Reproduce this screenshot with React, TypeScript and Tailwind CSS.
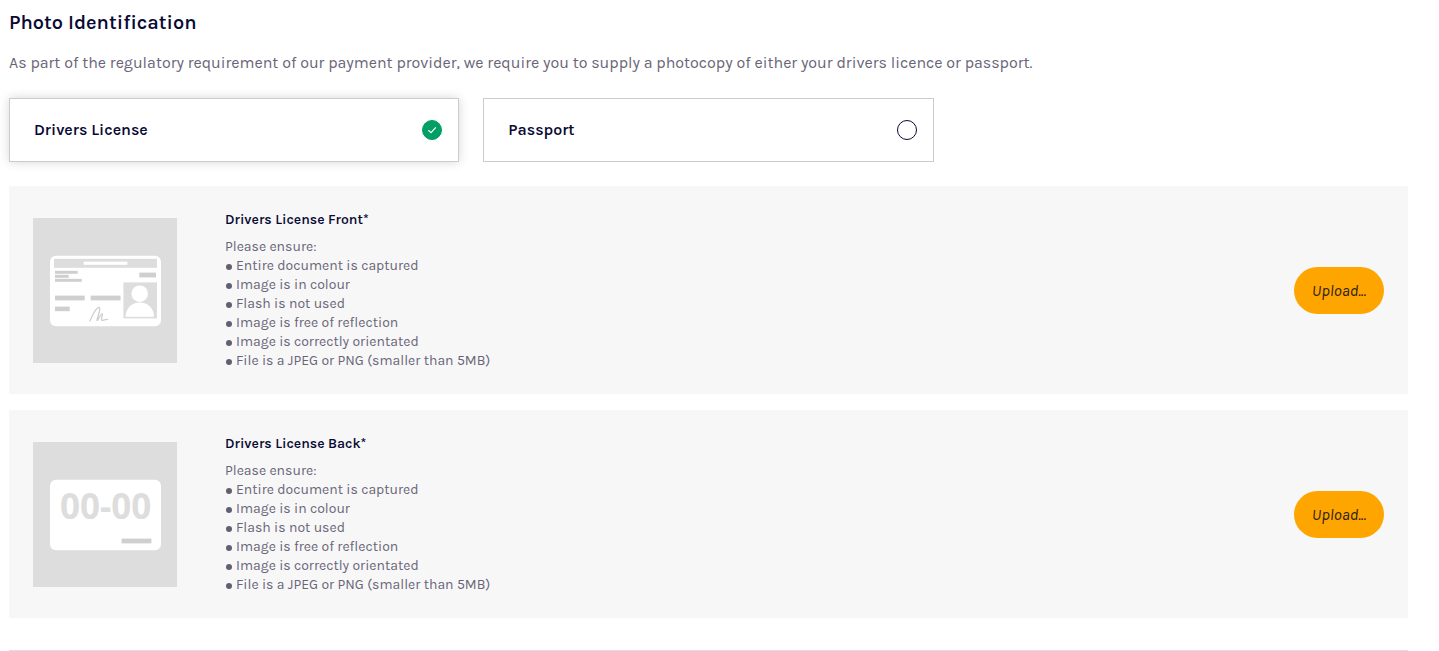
import {useState} from "react";
import type {ReactNode} from "react";

const documentTypes = [
    {id: "license", label: "Drivers License"},
    {id: "passport", label: "Passport"},
];

const requirements = [
    "Entire document is captured",
    "Image is in colour",
    "Flash is not used",
    "Image is free of reflection",
    "Image is correctly orientated",
    "File is a JPEG or PNG (smaller than 5MB)",
];

function LicenseFront() {
    return (
        <svg viewBox="0 0 144 145" className="h-[145px] w-36 shrink-0 bg-[#dddddd]" aria-hidden="true">
            <rect x="17" y="37.7" width="111" height="70.6" rx="6" fill="#fff"/>
            <rect x="21" y="40.8" width="103" height="9" fill="#dddddd"/>
            <rect x="50.6" y="43.6" width="43.8" height="3.2" fill="#fff"/>
            <g fill="#cfcfcf">
                <rect x="22" y="52.8" width="22.7" height="3"/>
                <rect x="22" y="56.8" width="13.7" height="3"/>
                <rect x="22" y="60.8" width="26.7" height="3"/>
                <rect x="106.3" y="54.6" width="16.7" height="4.8"/>
                <rect x="22" y="77.6" width="29.7" height="4.8"/>
                <rect x="57.6" y="77.6" width="30" height="4.8"/>
                <rect x="22" y="88.6" width="14.7" height="4.6"/>
            </g>
            {/* photo */}
            <rect x="90.4" y="64.4" width="33.6" height="36" fill="#dddddd"/>
            <circle cx="106.7" cy="75.7" r="8.3" fill="#fff"/>
            <path d="M92.6 98.8C92.6 90.4 98.6 84.4 106.8 84.4S121 90.4 121 98.8Z" fill="#fff"/>
            {/* signature */}
            <path
                d="M56.8 103C59.5 97.5 62.3 89.6 66 89.3C68.4 89.6 64.5 99 63.9 102.4C65 103.2 67.4 95.2 69.3 95.8C70.4 96.6 67.2 101.6 69 102.4C70.8 102.8 72 101 74.6 101.4"
                fill="none"
                stroke="#cfcfcf"
                strokeWidth="1.3"
                strokeLinecap="round"
                strokeLinejoin="round"
            />
        </svg>
    );
}

function LicenseBack() {
    return (
        <svg viewBox="0 0 144 145" className="h-[145px] w-36 shrink-0 bg-[#dddddd]" aria-hidden="true">
            <rect x="17" y="37.7" width="111" height="70.6" rx="6" fill="#fff"/>
            <text x="27" y="77" className="font-['Open_Sans',sans-serif] text-[35px] font-bold" fill="#dddddd">00-00</text>
            <rect x="88.6" y="96.6" width="29.8" height="4.8" fill="#cfcfcf"/>
        </svg>
    );
}

function UploadRow({title, picture}: { title: string; picture: ReactNode }) {
    return (
        <section className="flex items-center bg-[#f7f7f7] p-6">
            {picture}
            <div className="ml-12 flex-1 text-[14px] leading-[19px] text-[#696577]">
                <h2 className="mb-2 font-semibold text-[#090a33]">{title}*</h2>
                <p>Please ensure:</p>
                <ul>
                    {requirements.map((item) => (
                        <li key={item} className="flex items-center gap-1">
                            <span className="mt-0.5 ml-px size-1.5 rounded-full bg-[#625f70]"/>
                            {item}
                        </li>
                    ))}
                </ul>
            </div>
            <button
                type="button"
                aria-label={`Upload ${title}`}
                className="h-[47px] rounded-full bg-[#ffa500] px-[18px] pt-0.5 text-base italic text-[#2b2118]"
            >
                Upload...
            </button>
        </section>
    );
}

export default function App() {
    const [selected, setSelected] = useState("license");

    return (
        <main className="ml-[9px] mr-[31px] pt-[11px] font-['Karla','Inter',sans-serif] text-[#090a33]">
            <h1 className="mb-4 text-xl leading-6 font-semibold">Photo Identification</h1>
            <p className="mb-[23px] text-base leading-6 text-[#696577]">
                As part of the regulatory requirement of our payment provider, we require you to supply a photocopy of
                either your drivers licence or passport.
            </p>

            <div className="mb-6 grid grid-cols-3 gap-6">
                {documentTypes.map((type) => (
                    <label
                        key={type.id}
                        className="flex h-16 cursor-pointer items-center justify-between border border-[#cccccc] bg-white pr-4 pl-6 text-base font-semibold has-checked:shadow-[0_0_10px_rgba(0,0,0,0.16)]"
                    >
                        {type.label}
                        <span className="relative flex size-5">
                            <input
                                type="radio"
                                name="documentType"
                                checked={selected === type.id}
                                onChange={() => setSelected(type.id)}
                                className="peer size-5 cursor-pointer appearance-none rounded-full border border-[#090a33] checked:border-[#009f66] checked:bg-[#009f66]"
                            />
                            <svg
                                viewBox="0 0 20 20"
                                className="pointer-events-none absolute inset-0 hidden peer-checked:block"
                                fill="none"
                                stroke="#fff"
                                strokeWidth="1.2"
                                aria-hidden="true"
                            >
                                <path d="M6.3 10.2L9 12.6L13.8 7.3"/>
                            </svg>
                        </span>
                    </label>
                ))}
            </div>

            <div className="flex flex-col gap-4">
                <UploadRow title="Drivers License Front" picture={<LicenseFront/>}/>
                <UploadRow title="Drivers License Back" picture={<LicenseBack/>}/>
            </div>

            <hr className="mt-8 border-[#dddddd]"/>
        </main>
    );
}
